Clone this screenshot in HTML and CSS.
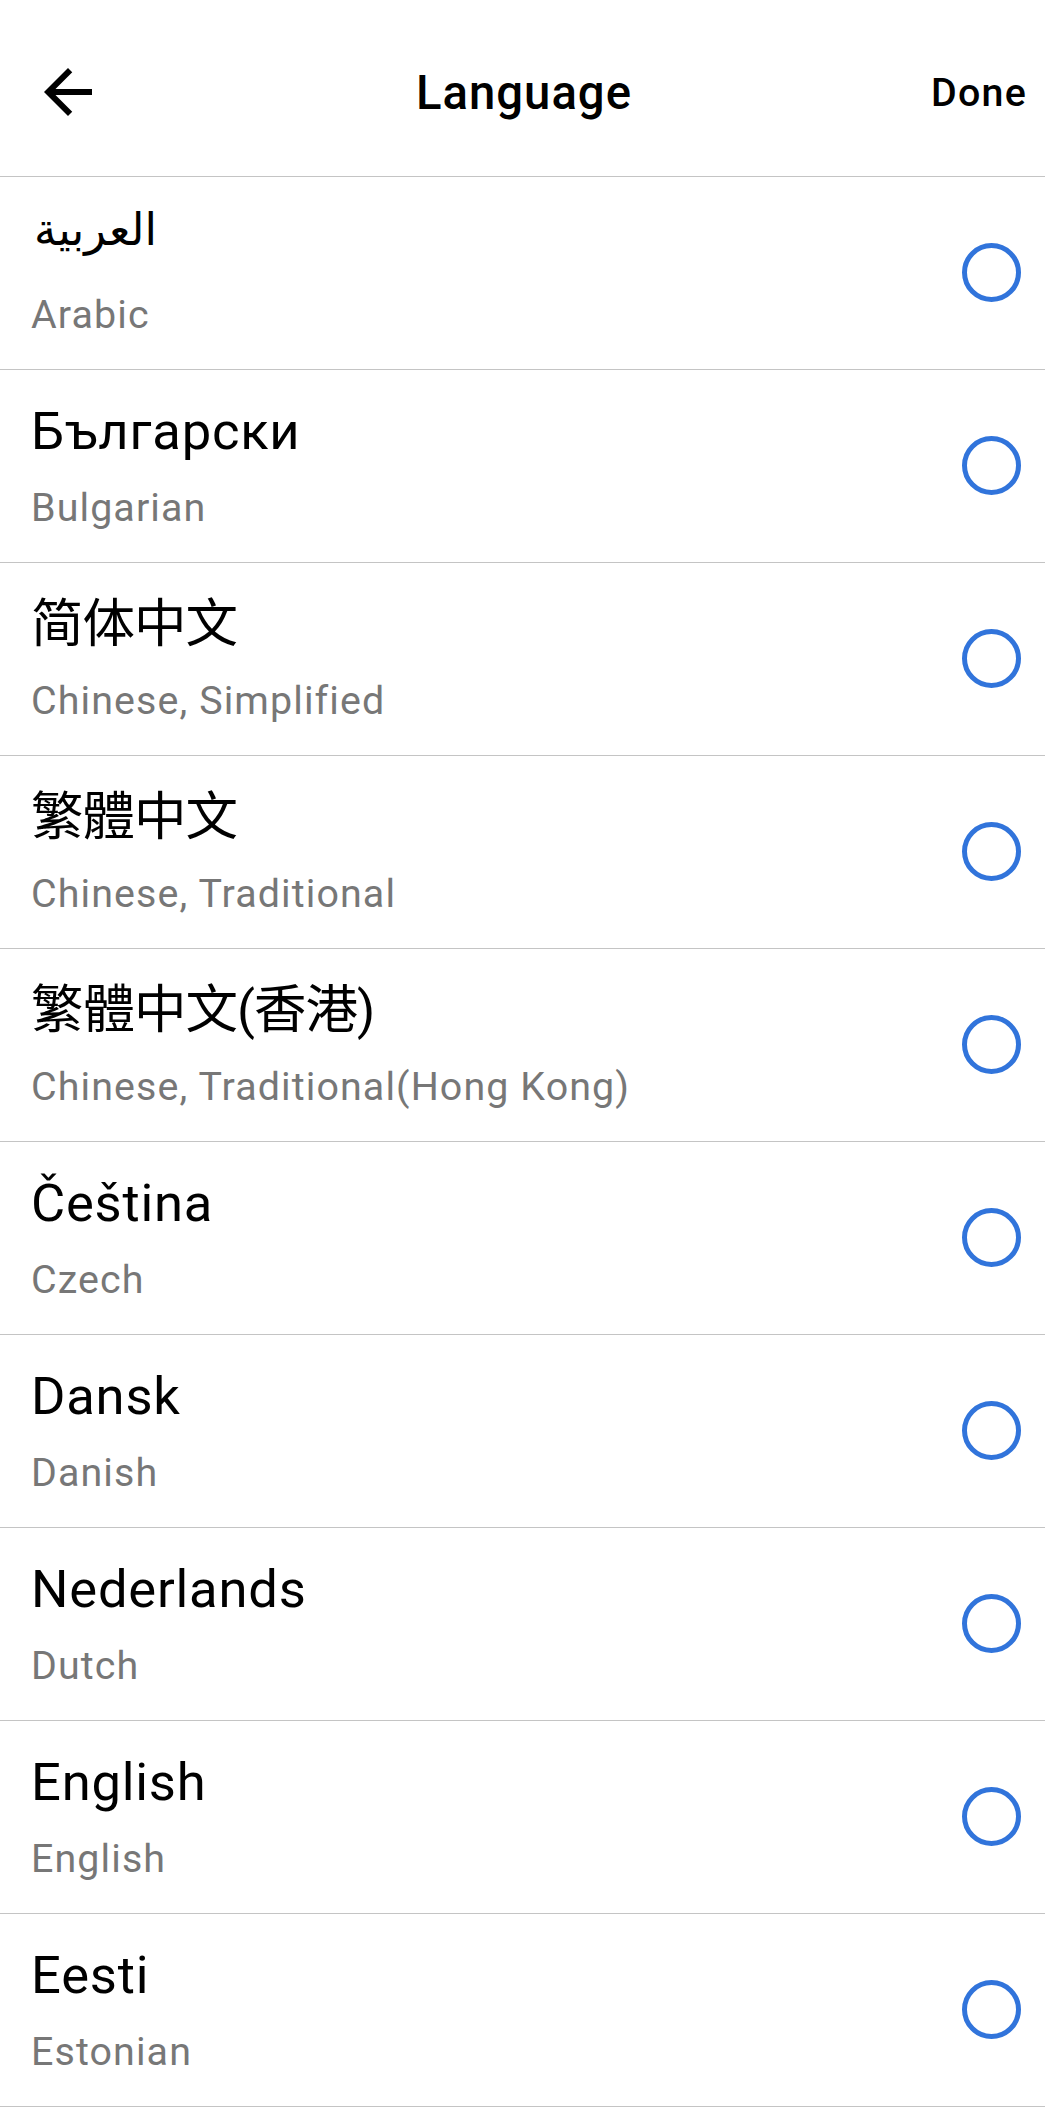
FILE: index.html
```html
<!DOCTYPE html>
<html lang="en">
<head>
<meta charset="utf-8">
<title>Language</title>
<link rel="stylesheet" href="styles.css">
</head>
<body>
<header class="topbar">
  <div class="topbar-left">
    <svg class="back" viewBox="0 0 24 24" aria-hidden="true"><path d="M20 11H7.83l5.59-5.59L12 4l-8 8 8 8 1.41-1.41L7.83 13H20v-2z"/></svg>
  </div>
  <h1 class="title">Language</h1>
  <div class="topbar-right"><span class="done">Done</span></div>
</header>
<ul class="list">
  <li class="row"><div class="text"><div class="native arabic" lang="ar">العربية</div><div class="english">Arabic</div></div><span class="radio"></span></li>
  <li class="row"><div class="text"><div class="native">Български</div><div class="english">Bulgarian</div></div><span class="radio"></span></li>
  <li class="row"><div class="text"><div class="native sc" lang="zh-CN">简体中文</div><div class="english">Chinese, Simplified</div></div><span class="radio"></span></li>
  <li class="row"><div class="text"><div class="native tc" lang="zh-TW">繁體中文</div><div class="english">Chinese, Traditional</div></div><span class="radio"></span></li>
  <li class="row"><div class="text"><div class="native tc" lang="zh-HK">繁體中文(香港)</div><div class="english">Chinese, Traditional(Hong Kong)</div></div><span class="radio"></span></li>
  <li class="row"><div class="text"><div class="native">Čeština</div><div class="english">Czech</div></div><span class="radio"></span></li>
  <li class="row"><div class="text"><div class="native">Dansk</div><div class="english">Danish</div></div><span class="radio"></span></li>
  <li class="row"><div class="text"><div class="native">Nederlands</div><div class="english">Dutch</div></div><span class="radio"></span></li>
  <li class="row"><div class="text"><div class="native">English</div><div class="english">English</div></div><span class="radio"></span></li>
  <li class="row"><div class="text"><div class="native">Eesti</div><div class="english">Estonian</div></div><span class="radio"></span></li>
</ul>
</body>
</html>
```
FILE: styles.css
```css
* { box-sizing: border-box; }
html, body { margin: 0; padding: 0; background: #ffffff; }
body {
  font-family: Roboto, "Noto Sans", "DejaVu Sans", sans-serif;
  color: #000000;
}
.topbar {
  height: 177px;
  padding-top: 11px;
  border-bottom: 1px solid #c4c4c4;
  display: grid;
  grid-template-columns: 1fr auto 1fr;
  align-items: center;
}
.topbar-left { display: flex; align-items: center; padding-left: 32px; }
.back { width: 72px; height: 72px; fill: #000; margin-bottom: 3px; display: block; }
.title {
  margin: 0;
  font-size: 47.25px;
  font-weight: 500;
  line-height: 1.172;
  letter-spacing: 1px;
  text-align: center;
  padding-left: 3px;
}
.topbar-right { display: flex; justify-content: flex-end; padding-right: 18px; }
.done { font-size: 39.4px; font-weight: 500; line-height: 1.172; letter-spacing: 1.2px; }
.list { list-style: none; margin: 0; padding: 0; }
.row {
  height: 193px;
  padding: 29.5px 24px 31.5px 31px;
  border-bottom: 1px solid #c4c4c4;
  display: flex;
  align-items: center;
  justify-content: space-between;
}
.text { display: flex; flex-direction: column; }
.native { font-size: 52.5px; line-height: 62px; letter-spacing: 0.8px; white-space: nowrap; }
.native.arabic {
  font-family: "DejaVu Sans", sans-serif;
  font-size: 45px;
  letter-spacing: 0;
  padding-left: 3px;
  line-height: 46px;
  padding-bottom: 16px;
}
.native.sc { font-family: Roboto, "Noto Sans CJK SC", sans-serif; letter-spacing: -1px; }
.native.tc { font-family: Roboto, "Noto Sans CJK TC", sans-serif; letter-spacing: -1px; }
.english { font-size: 39.4px; line-height: 46px; margin-top: 23px; letter-spacing: 1.1px; color: #777777; white-space: nowrap; }
.radio {
  width: 59px;
  height: 59px;
  border: 5px solid #3174db;
  border-radius: 50%;
  flex: none;
}
```
